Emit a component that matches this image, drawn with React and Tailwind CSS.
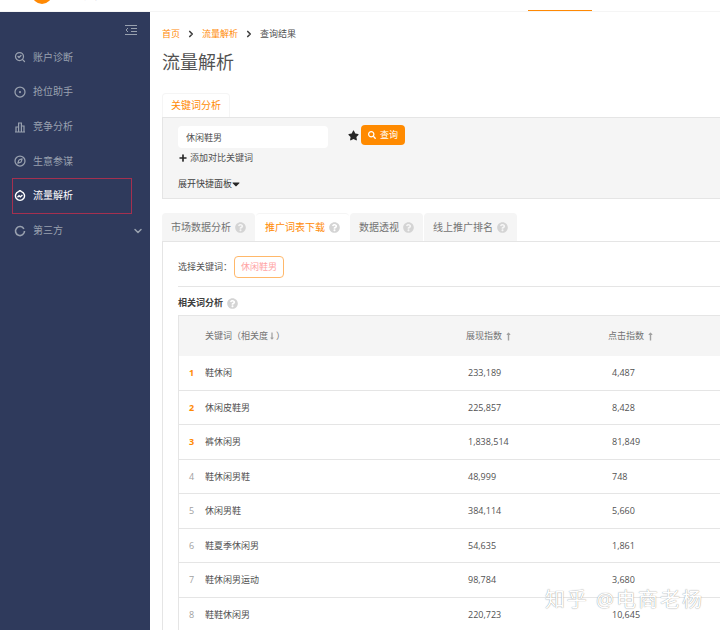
import { ChevronDown, ChevronRight, CircleDot, Compass, Plus, SearchCheck } from "lucide-react";
import { FaCaretDown, FaLongArrowAltDown, FaLongArrowAltUp, FaQuestionCircle, FaSearch, FaStar } from "react-icons/fa";

const BarsIcon = () => (
  <svg viewBox="0 0 12 12" className="w-3 h-3" fill="none" stroke="currentColor" strokeWidth="1.2">
    <path d="M1 11h10M2 11V6h2.600v5M4.600 11V2h2.800v9M7.400 11V5H10v6" />
  </svg>
);

const FlowIcon = () => (
  <svg viewBox="0 0 12 12" className="w-3 h-3" fill="none" stroke="currentColor" strokeWidth="1.4">
    <path d="M4.500 1.600a4.500 4.500 0 1 0 3 0L6 .6z" />
    <path d="M3.500 7.200 5 5.700l1.400 1.200 2-2" />
  </svg>
);

const RingIcon = () => (
  <svg viewBox="0 0 12 12" className="w-3 h-3" fill="none" stroke="currentColor" strokeWidth="1.6">
    <path d="M9.900 3.800A4.500 4.500 0 1 0 10.500 6" />
  </svg>
);

const menuItems = [
  { label: "账户诊断", icon: <SearchCheck size={12} strokeWidth={2.5} /> },
  { label: "抢位助手", icon: <CircleDot size={12} strokeWidth={2.5} /> },
  { label: "竞争分析", icon: <BarsIcon /> },
  { label: "生意参谋", icon: <Compass size={12} strokeWidth={2.5} /> },
  { label: "流量解析", icon: <FlowIcon />, active: true },
  { label: "第三方", icon: <RingIcon />, more: true },
];

const rows = [
  ["鞋休闲", "233,189", "4,487"],
  ["休闲皮鞋男", "225,857", "8,428"],
  ["裤休闲男", "1,838,514", "81,849"],
  ["鞋休闲男鞋", "48,999", "748"],
  ["休闲男鞋", "384,114", "5,660"],
  ["鞋夏季休闲男", "54,635", "1,861"],
  ["鞋休闲男运动", "98,784", "3,680"],
  ["鞋鞋休闲男", "220,723", "10,645"],
];

const tabs = [
  { label: "市场数据分析" },
  { label: "推广词表下载", active: true },
  { label: "数据透视" },
  { label: "线上推广排名" },
];

const Help = () => <FaQuestionCircle size={11} className="text-neutral-300" />;

export default function App() {
  return (
    <div className="relative h-screen overflow-hidden bg-white text-[9px] text-neutral-600 font-['Open_Sans','Noto_Sans_CJK_SC',sans-serif]">
      {/* Top bar, cut off by the screenshot */}
      <div className="flex h-3 overflow-hidden border-b border-neutral-100 pl-8 pr-32">
        <div className="w-5 h-5 -mt-4 rounded-full bg-orange-400" />
        <div className="ml-2 -mt-2.5 leading-3 text-[8px] text-neutral-500">商家服务平台</div>
        <div className="ml-auto mt-2.5 w-16 h-0.5 bg-orange-400" />
      </div>

      <div className="flex h-full">
        {/* Sidebar */}
        <aside className="w-[150px] shrink-0 bg-[#2f3a5c] text-[10px] text-gray-400">
          <div className="flex justify-end pt-3 pr-3">
            <svg viewBox="0 0 14 12" className="w-3.5 h-3" fill="none" stroke="currentColor">
              <path d="M1 1.500h12M7 4.500h6M7 7.500h6M1 10.500h12M4 4 2 6l2 2" />
            </svg>
          </div>
          <ul className="grid grid-rows-6 h-52 mt-1">
            {menuItems.map((item) => (
              <li
                key={item.label}
                className={`relative flex items-center gap-1.75 pl-3.5 pr-1.5 ${item.active ? "text-white" : ""}`}
              >
                {item.active && (
                  <span className="absolute left-3 -inset-y-px w-30 border border-[#a5304f]" />
                )}
                {item.icon}
                <span>{item.label}</span>
                {item.more && <ChevronDown size={12} strokeWidth={3} className="ml-auto" />}
              </li>
            ))}
          </ul>
        </aside>

        {/* Main */}
        <main className="flex-1 min-w-0 pl-3">
          <div className="flex items-center gap-1.5 pt-3.5 leading-4">
            <span className="text-orange-400">首页</span>
            <ChevronRight size={10} strokeWidth={4} className="text-neutral-700" />
            <span className="text-orange-400">流量解析</span>
            <ChevronRight size={10} strokeWidth={4} className="text-neutral-700" />
            <span>查询结果</span>
          </div>
          <h1 className="mt-1.5 pb-px text-lg text-neutral-600">流量解析</h1>

          <div className="mt-4 flex text-[10px]">
            <div className="flex items-center h-6 px-2 border border-b-0 border-neutral-100 rounded-t text-orange-400">
              关键词分析
            </div>
          </div>
          <div className="border border-r-0 border-neutral-200 bg-neutral-100 pl-3.75 pt-2 pb-1.5">
            <div className="flex items-start">
              <input
                readOnly
                value="休闲鞋男"
                className="w-[150px] h-5.5 px-2 rounded bg-white text-neutral-600 outline-none"
              />
              <FaStar size={11} className="ml-5 mt-1 text-neutral-800" />
              <button className="flex items-center justify-center gap-1 ml-0.5 -mt-px w-11 h-5 rounded bg-[#ff8a00] text-white">
                <FaSearch size={8} />
                查询
              </button>
            </div>
            <div className="flex items-center gap-0.5 mt-0.5 leading-4">
              <Plus size={10} strokeWidth={4} className="text-neutral-800" />
              添加对比关键词
            </div>
            <div className="flex items-center mt-2.5 leading-4 text-neutral-700">
              展开快捷面板
              <FaCaretDown size={12} className="-ml-0.5 text-neutral-800" />
            </div>
          </div>

          {/* Tabs */}
          <div className="mt-3.5 flex gap-px text-[10px]">
            {tabs.map((tab) => (
              <div
                key={tab.label}
                className={`flex items-center gap-1 h-7 px-2.25 rounded-t ${
                  tab.active ? "bg-white border-t border-neutral-100 text-orange-400" : "bg-neutral-100 text-neutral-500"
                }`}
              >
                {tab.label}
                <Help />
              </div>
            ))}
          </div>

          <div className="border-l border-t border-neutral-200 pl-3.75">
            <div className="flex items-center gap-0.5 pt-3.5 pb-2 border-b border-neutral-200">
              <span>选择关键词：</span>
              <span className="flex items-center h-5.5 px-1.5 rounded border border-orange-300 text-red-300">
                休闲鞋男
              </span>
            </div>
            <div className="flex items-center gap-1 mt-2 leading-4 font-bold text-neutral-700">
              相关词分析
              <Help />
            </div>

            {/* Table */}
            <div className="mt-1 border-l border-t border-neutral-200">
              <div className="grid grid-cols-[26px_261px_142px_1fr] items-center h-10 bg-neutral-100 text-neutral-500">
                <span />
                <span className="flex items-center">
                  关键词（相关度
                  <FaLongArrowAltDown size={8} className="text-neutral-400" />）
                </span>
                <span className="flex items-center">
                  展现指数
                  <FaLongArrowAltUp size={9} className="ml-0.5 text-neutral-400" />
                </span>
                <span className="flex items-center">
                  点击指数
                  <FaLongArrowAltUp size={9} className="ml-0.5 text-neutral-400" />
                </span>
              </div>
              <div className="grid grid-rows-8 h-[276px]">
                {rows.map((row, i) => (
                  <div
                    key={row[0]}
                    className="grid grid-cols-[26px_261px_142px_1fr] items-center border-b border-neutral-200"
                  >
                    <span className={`pl-2.5 ${i < 3 ? "font-bold text-orange-400" : "text-neutral-400"}`}>{i + 1}</span>
                    <span>{row[0]}</span>
                    <span className="pl-0.5">{row[1]}</span>
                    <span className="pl-1">{row[2]}</span>
                  </div>
                ))}
              </div>
            </div>
          </div>
        </main>
      </div>

      {/* Watermark */}
      <div className="absolute right-4 bottom-4 text-xl tracking-widest text-white [text-shadow:0_0_1px_#777]">
        知乎 @电商老杨
      </div>
    </div>
  );
}
